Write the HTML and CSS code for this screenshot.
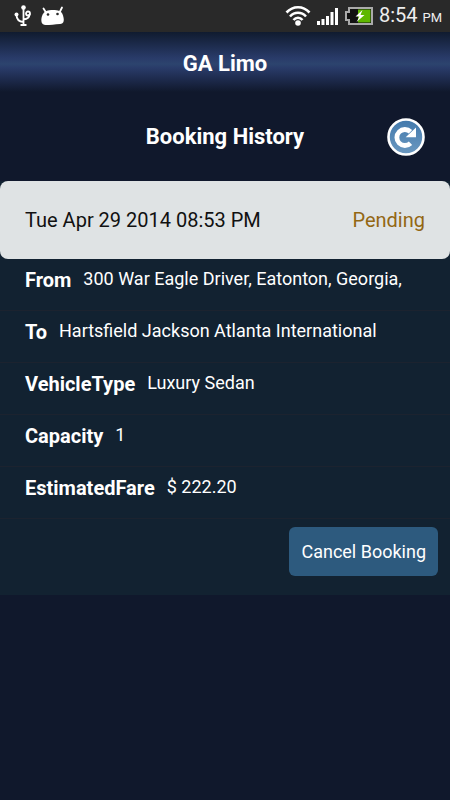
FILE: index.html
```html
<!DOCTYPE html>
<html lang="en">
<head>
<meta charset="utf-8">
<meta name="viewport" content="width=device-width, initial-scale=1">
<title>GA Limo</title>
<link rel="stylesheet" href="styles.css">
</head>
<body>
<div class="status-bar">
  <div class="status-group status-left">
    <svg width="18" height="24" viewBox="0 0 18 24" fill="none" stroke="#fff" stroke-width="1.8" aria-hidden="true">
      <path d="M9.500 3v17M9.500 18C4 17.500 2.500 15 2.500 11M9.500 15.500C14 15 15.500 13 15.500 10"/>
      <circle cx="9.500" cy="3.500" r="2.300" fill="#fff" stroke="none"/>
      <path d="M6.500 20h6v2h-6z" fill="#fff" stroke="none"/>
      <circle cx="2.500" cy="10.500" r="2" fill="#fff" stroke="none"/>
      <circle cx="14" cy="9.500" r="2"/>
    </svg>
    <svg width="26" height="24" viewBox="0 0 26 24" aria-hidden="true">
      <path d="M3.500 4.500l2.500 4M22 3.500l-2.500 5" stroke="#fff" stroke-width="1.800" stroke-linecap="round"/>
      <path d="M2 12C4 6.500 8 6 13 6s8.500.500 10 5.500c1.500 5 1 8-3 8.500-5 .500-10 1-14.500 1C1.500 21 .500 17 2 12z" fill="#fff"/>
      <circle cx="8" cy="10.500" r="1.300" fill="#292929"/><circle cx="17.500" cy="10" r="1.300" fill="#292929"/>
    </svg>
  </div>
  <div class="status-group status-right">
    <svg width="26" height="22" viewBox="0 0 26 22" fill="none" stroke="#fff" stroke-width="2.600" aria-hidden="true">
      <path d="M1.500 7.500C8 .500 18 .500 24.500 7.500M5 11.500c4.500-5 11.500-5 16 0M8.500 15c2.500-3 6.500-3 9 0"/>
      <circle cx="13" cy="18" r="2.800" fill="#fff" stroke="none"/>
    </svg>
    <svg width="22" height="18" viewBox="0 0 22 18" fill="#fff" aria-hidden="true">
      <path d="M0 14h3v4H0zM4.500 12h3v6h-3zM9 9h3v9H9zM13.500 5h3v13h-3zM18 1h3v17h-3z"/>
    </svg>
    <svg width="28" height="18" viewBox="0 0 28 18" aria-hidden="true">
      <path d="M4 1h23v16H4v-4H1V5h3z" fill="#111" stroke="#aaa" stroke-width="2"/>
      <path d="M13 2.500h12.500v13H13z" fill="#5fb800"/>
      <path d="M17.500 3l-7 6.500h4L11.500 15l8-7h-4z" fill="#fff"/>
    </svg>
    <div class="clock">8:54 <span class="meridiem">PM</span></div>
  </div>
</div>
<header class="app-bar"><h1>GA Limo</h1></header>
<main>
  <div class="page-head">
    <h2>Booking History</h2>
    <button class="refresh" type="button" aria-label="Refresh">
      <svg width="38" height="38" viewBox="0 0 38 38" aria-hidden="true">
        <defs><linearGradient id="disc" x1="0" y1="0" x2="0" y2="1"><stop offset="0" stop-color="#4279ac"/><stop offset="1" stop-color="#6b98c0"/></linearGradient></defs>
        <circle cx="19" cy="19" r="17.500" fill="url(#disc)" stroke="#fff" stroke-width="2.600"/>
        <path d="M23.500 13.800a8 8 0 1 0 0 11.400" fill="none" stroke="#fff" stroke-width="4.800"/>
        <path d="M29 9.500v9.800H18.700z" fill="#fff"/>
      </svg>
    </button>
  </div>
  <section class="booking">
    <div class="booking-head"><span>Tue Apr 29 2014 08:53 PM</span><span class="state">Pending</span></div>
    <dl>
      <div class="row"><dt>From</dt><dd>300 War Eagle Driver, Eatonton, Georgia,</dd></div>
      <div class="row"><dt>To</dt><dd>Hartsfield Jackson Atlanta International</dd></div>
      <div class="row"><dt>VehicleType</dt><dd>Luxury Sedan</dd></div>
      <div class="row"><dt>Capacity</dt><dd>1</dd></div>
      <div class="row"><dt>EstimatedFare</dt><dd>$ 222.20</dd></div>
    </dl>
    <div class="actions"><button class="cancel" type="button">Cancel Booking</button></div>
  </section>
</main>
</body>
</html>
```
FILE: styles.css
```css
* { box-sizing: border-box; }
body {
  margin: 0;
  min-height: 100vh;
  background: #10182c;
  color: #fff;
  font-family: Roboto, "Liberation Sans", sans-serif;
}
h1, h2, dl, dd { margin: 0; }
button { border: 0; font: inherit; color: inherit; cursor: pointer; }
svg { display: block; }
.status-bar {
  display: flex;
  justify-content: space-between;
  align-items: center;
  height: 32px;
  padding: 0 8px 0 14px;
  background: #292929;
}
.status-group { display: flex; align-items: center; }
.status-left { gap: 8px; }
.status-right { gap: 6px; }
.clock { font-size: 20px; line-height: 32px; color: #eee; }
.meridiem { font-size: 13px; }
.app-bar {
  height: 64px;
  background: linear-gradient(#101b2f 0, #293b69 26px, #2c446e 32px, #293b69 36px, #10182c 60px);
}
h1, h2 { font-size: 22px; font-weight: 700; text-align: center; }
h1 { line-height: 64px; }
.page-head {
  display: grid;
  grid-template-columns: 38px 1fr 38px;
  align-items: center;
  height: 85px;
  padding: 0 25px 4px;
}
h2 { grid-column: 2; line-height: 30px; }
.refresh { padding: 0; background: none; }
.booking { background: #122231; }
.booking-head {
  display: flex;
  justify-content: space-between;
  align-items: center;
  height: 78px;
  padding: 0 25px;
  border-radius: 8px;
  background: #dfe3e4;
  color: #111;
  font-size: 20px;
}
.state { color: #936713; }
.row {
  display: flex;
  gap: 12px;
  min-height: 52px;
  padding: 6px 25px;
  border-bottom: 1px solid #1c232f;
}
dt { font-size: 20px; font-weight: 700; line-height: 30px; }
dd { font-size: 18px; line-height: 28px; }
.actions { display: flex; justify-content: flex-end; padding: 8px 12px 19px; }
.cancel {
  height: 49px;
  padding: 0 12px;
  border-radius: 6px;
  background: #2d5a7e;
  font-size: 18px;
}
```
